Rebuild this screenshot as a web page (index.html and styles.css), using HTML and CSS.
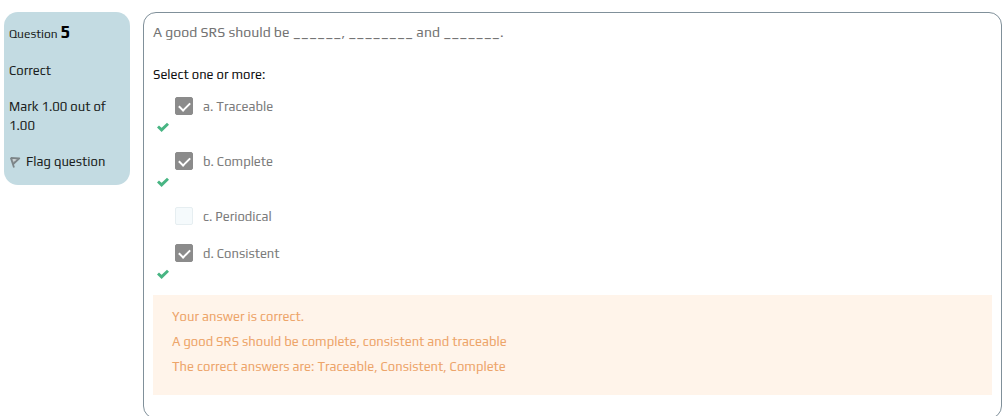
FILE: index.html
```html
<!DOCTYPE html>
<html lang="en">
<head>
<meta charset="utf-8">
<meta name="viewport" content="width=device-width, initial-scale=1">
<title>Question 5</title>
<link rel="stylesheet" href="styles.css">
</head>
<body>
<main class="question">
  <aside class="info">
    <h3 class="info-title">Question <span class="number">5</span></h3>
    <div class="state">Correct</div>
    <div class="grade">Mark 1.00 out of 1.00</div>
    <a class="flag" href="#flag">
      <svg class="flag-icon" viewBox="0 0 12 13" aria-hidden="true"><path d="M1.800 2.800 5 12.500M1.800 2.800l8.500.6L4.200 9" fill="#b3babd" stroke="#7d8588" stroke-width="1.800" stroke-linejoin="round"/><path d="M4 5h2.500" stroke="#e0e6e8"/></svg>
      Flag question
    </a>
  </aside>
  <section class="content">
    <p class="prompt">A good SRS should be ______, ________ and _______.</p>
    <fieldset class="answers">
      <legend class="legend">Select one or more:</legend>
      <div class="option">
        <label class="choice"><input class="box" type="checkbox" checked> a. Traceable</label>
        <svg class="tick" viewBox="0 0 12 12" role="img" aria-label="Correct"><path d="M1 5.500 4.600 8.900 11 2.800" fill="none" stroke="#48b583" stroke-width="2.900"/></svg>
      </div>
      <div class="option">
        <label class="choice"><input class="box" type="checkbox" checked> b. Complete</label>
        <svg class="tick" viewBox="0 0 12 12" role="img" aria-label="Correct"><path d="M1 5.500 4.600 8.900 11 2.800" fill="none" stroke="#48b583" stroke-width="2.900"/></svg>
      </div>
      <div class="option">
        <label class="choice"><input class="box" type="checkbox"> c. Periodical</label>
      </div>
      <div class="option">
        <label class="choice"><input class="box" type="checkbox" checked> d. Consistent</label>
        <svg class="tick" viewBox="0 0 12 12" role="img" aria-label="Correct"><path d="M1 5.500 4.600 8.900 11 2.800" fill="none" stroke="#48b583" stroke-width="2.900"/></svg>
      </div>
    </fieldset>
    <div class="feedback">
      <p class="line">Your answer is correct.</p>
      <p class="line">A good SRS should be complete, consistent and traceable</p>
      <p class="line">The correct answers are: Traceable, Consistent, Complete</p>
    </div>
  </section>
</main>
</body>
</html>
```
FILE: styles.css
```css
* {
  box-sizing: border-box;
}

body {
  margin: 0;
  background: #fff;
  color: #1b1f22;
  font: 13px/20px Play, Roboto, sans-serif;
  overflow: hidden;
}

.question {
  display: flex;
  align-items: flex-start;
  gap: 13px;
  padding: 12px 5px 0 4px;
}

.info {
  display: flex;
  flex: 0 0 126px;
  flex-direction: column;
  gap: 17px;
  padding: 12px 5px 14px;
  border-radius: 14px;
  background: #c3dbe2;
  line-height: 19px;
}

.info-title {
  margin: 0;
  font-size: 12px;
  font-weight: 400;
}

.number {
  color: #000;
  font-size: 17px;
  font-weight: 700;
  line-height: 1;
}

.grade {
  padding-right: 10px;
}

.flag {
  display: flex;
  align-items: center;
  gap: 5px;
  color: inherit;
  text-decoration: none;
}

.flag-icon {
  width: 12px;
  height: 13px;
}

.content {
  flex: 1;
  padding: 9px 9px 23px;
  border: 1px solid #80909a;
  border-radius: 13px;
}

.prompt {
  margin: 0 0 23px;
  color: #747474;
  font-size: 14px;
}

.answers {
  min-width: 0;
  margin: 0;
  padding: 0;
  border: 0;
}

.legend {
  margin-bottom: 12px;
  padding: 0;
  color: #111;
}

.option {
  margin-bottom: 19px;
}

.option:last-child {
  margin-bottom: 15px;
}

.choice {
  display: flex;
  align-items: center;
  gap: 10px;
  height: 18px;
  padding-left: 22px;
  color: #7c7c7c;
  line-height: 21px;
}

.box {
  display: grid;
  place-items: center;
  width: 18px;
  height: 18px;
  margin: 0;
  border: 1px solid #e6eef1;
  border-radius: 2px;
  background: #f5fafc;
  appearance: none;
}

.box:checked {
  border-color: #8b8b8b;
  background: #8b8b8b;
}

.box:checked::after {
  width: 5px;
  height: 9px;
  margin-bottom: 1px;
  border: solid #fff;
  border-width: 0 2px 2px 0;
  content: "";
  transform: rotate(45deg);
}

.tick {
  display: block;
  width: 12px;
  height: 12px;
  margin: 6px 0 0 4px;
}

.feedback {
  display: flex;
  flex-direction: column;
  gap: 5px;
  padding: 12px 19px 18px;
  background: #fff4ea;
  color: #eda56a;
}

.line {
  margin: 0;
}
```
